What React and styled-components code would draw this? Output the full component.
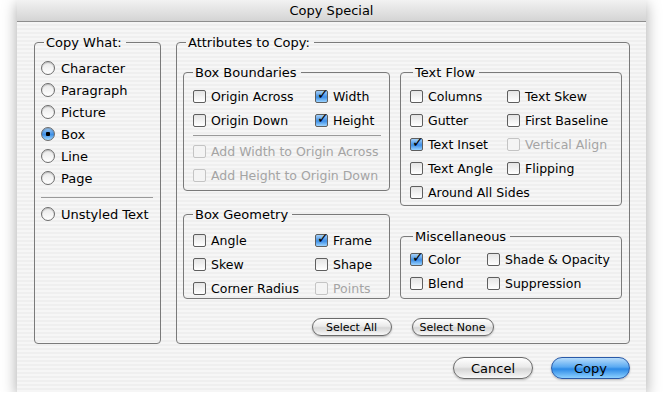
import React from "react";
import styled, { createGlobalStyle } from "styled-components";

const Global = createGlobalStyle`
  body { margin: 0; background: #fff; font-family: "DejaVu Sans", "Liberation Sans", sans-serif; font-size: 12px; color: #000; }
`;

const stripes = "repeating-linear-gradient(180deg, #efefef 0 2px, #f6f6f6 2px 4px)";

const Window = styled.div`
  margin-left: 17px;
  width: 629px;
  height: 392px;
  background: ${stripes};
  box-shadow: 0 4px 14px rgba(0,0,0,0.35);
  display: flex;
  flex-direction: column;
`;

const TitleBar = styled.div`
  height: 22px;
  box-sizing: border-box;
  border-bottom: 1px solid #8e8e8e;
  background: linear-gradient(#f2f2f2, #d4d4d4);
  display: flex;
  align-items: center;
  justify-content: center;
  font-size: 13px;
`;

const Body = styled.div`
  padding: 13px 16px 0 17px;
  display: flex;
  flex-direction: column;
`;

const Row = styled.div`
  display: flex;
  gap: ${(p) => p.gap || 0}px;
`;

const Group = styled.fieldset`
  margin: 0;
  box-sizing: border-box;
  width: ${(p) => p.w}px;
  height: ${(p) => p.h}px;
  border: 1px solid #7a7a7a;
  border-radius: 4px;
  padding: ${(p) => p.pad || "0"};
  min-width: 0;
`;

const Legend = styled.legend`
  padding: 0 4px 0 2px;
  margin-left: ${(p) => (p.tight ? 0 : 3)}px;
  font-size: 13px;
  line-height: 15px;
`;

const RadioRow = styled.div`
  height: 22px;
  display: flex;
  align-items: center;
  gap: 6px;
  font-size: 13px;
`;

const Radio = styled.span`
  width: 14px;
  height: 14px;
  box-sizing: border-box;
  border-radius: 50%;
  border: 1px solid #6c6c6c;
  background: ${(p) =>
    p.on
      ? "radial-gradient(circle at 50% 50%, #000 0 2px, transparent 2.5px), linear-gradient(#9fcaf4, #3d8fe6 55%, #a6dbff)"
      : "linear-gradient(#e8e8e8, #ffffff)"};
  box-shadow: inset 0 1px 1px rgba(0,0,0,0.2);
`;

const Sep = styled.div`
  height: 1px;
  background: #9a9a9a;
  margin: ${(p) => p.m || "8px 0"};
`;

const CheckGrid = styled.div`
  display: grid;
  grid-template-columns: ${(p) => p.cols};
  grid-auto-rows: ${(p) => p.rowH || 24}px;
`;

const CheckLabel = styled.div`
  display: flex;
  align-items: center;
  gap: 5px;
  font-size: 12.5px;
  color: ${(p) => (p.disabled ? "#a4a4a4" : "#000")};
  white-space: nowrap;
`;

const Box = styled.span`
  width: 13px;
  height: 13px;
  box-sizing: border-box;
  border: 1px solid ${(p) => (p.disabled ? "#c4c4c4" : "#5e5e5e")};
  border-radius: 2px;
  background: ${(p) =>
    p.on ? "linear-gradient(#a6d0f7, #3d8ee6 55%, #9bd3ff)" : p.disabled ? "#f4f4f4" : "linear-gradient(#e4e4e4, #fff)"};
  position: relative;
  flex: none;
`;

const Tick = styled.span`
  position: absolute;
  left: 1px;
  top: -5px;
  font-size: 14px;
  font-weight: bold;
  color: #000;
`;

const Check = ({ label, on, disabled }) => (
  <CheckLabel disabled={disabled}>
    <Box on={on} disabled={disabled}>{on && <Tick>✓</Tick>}</Box>
    {label}
  </CheckLabel>
);

const Col = styled.div`
  display: flex;
  flex-direction: column;
  gap: ${(p) => p.gap || 0}px;
`;

const ButtonRow = styled.div`
  display: flex;
  justify-content: ${(p) => p.justify || "center"};
  gap: ${(p) => p.gap}px;
  margin-top: ${(p) => p.mt}px;
`;

const Pill = styled.button`
  width: ${(p) => p.w}px;
  height: ${(p) => (p.small ? 18 : 22)}px;
  border-radius: 11px;
  border: 1px solid ${(p) => (p.primary ? "#2a5aa8" : "#6a6a6a")};
  background: ${(p) =>
    p.primary
      ? "linear-gradient(#b7dcfb, #5aaaf2 45%, #2d8ae6 55%, #8cd0ff)"
      : "linear-gradient(#ffffff, #eaeaea 45%, #d6d6d6 55%, #f8f8f8)"};
  font-family: inherit;
  font-size: ${(p) => (p.small ? 11 : 13)}px;
  color: #000;
  padding: 0;
  box-shadow: 0 1px 2px rgba(0,0,0,0.25);
`;

const copyWhat = ["Character", "Paragraph", "Picture", "Box", "Line", "Page"];

export default function App() {
  return (
    <>
      <Global />
      <Window>
        <TitleBar>Copy Special</TitleBar>
        <Body>
          <Row gap={15}>
            <Group w={127} h={309} pad="7px 7px 0 6px">
              <Legend>Copy What:</Legend>
              {copyWhat.map((c) => (
                <RadioRow key={c}>
                  <Radio on={c === "Box"} />
                  {c}
                </RadioRow>
              ))}
              <Sep m="8px 0 5px" />
              <RadioRow>
                <Radio />
                Unstyled Text
              </RadioRow>
            </Group>
            <Group w={454} h={309} pad="15px 7px 0 6px">
              <Legend>Attributes to Copy:</Legend>
              <Row gap={10}>
                <Col gap={16}>
                  <Group w={207} h={126} pad="4px 8px 0 9px">
                    <Legend tight>Box Boundaries</Legend>
                    <CheckGrid cols="122px 1fr">
                      <Check label="Origin Across" />
                      <Check label="Width" on />
                      <Check label="Origin Down" />
                      <Check label="Height" on />
                    </CheckGrid>
                    <Sep m="3px 0 3px" />
                    <CheckGrid cols="1fr">
                      <Check label="Add Width to Origin Across" disabled />
                      <Check label="Add Height to Origin Down" disabled />
                    </CheckGrid>
                  </Group>
                  <Group w={207} h={92} pad="6px 8px 0 9px">
                    <Legend tight>Box Geometry</Legend>
                    <CheckGrid cols="122px 1fr">
                      <Check label="Angle" />
                      <Check label="Frame" on />
                      <Check label="Skew" />
                      <Check label="Shape" />
                      <Check label="Corner Radius" />
                      <Check label="Points" disabled />
                    </CheckGrid>
                  </Group>
                </Col>
                <Col gap={23}>
                  <Group w={222} h={141} pad="4px 8px 0 9px">
                    <Legend>Text Flow</Legend>
                    <CheckGrid cols="97px 1fr">
                      <Check label="Columns" />
                      <Check label="Text Skew" />
                      <Check label="Gutter" />
                      <Check label="First Baseline" />
                      <Check label="Text Inset" on />
                      <Check label="Vertical Align" disabled />
                      <Check label="Text Angle" />
                      <Check label="Flipping" />
                      <Check label="Around All Sides" />
                    </CheckGrid>
                  </Group>
                  <Group w={222} h={70} pad="3px 8px 0 9px">
                    <Legend>Miscellaneous</Legend>
                    <CheckGrid cols="77px 1fr">
                      <Check label="Color" on />
                      <Check label="Shade &amp; Opacity" />
                      <Check label="Blend" />
                      <Check label="Suppression" />
                    </CheckGrid>
                  </Group>
                </Col>
              </Row>
              <ButtonRow gap={20} mt={19}>
                <Pill small w={80}>Select All</Pill>
                <Pill small w={82}>Select None</Pill>
              </ButtonRow>
            </Group>
          </Row>
          <ButtonRow justify="flex-end" gap={18} mt={13}>
            <Pill w={80}>Cancel</Pill>
            <Pill primary w={79}>Copy</Pill>
          </ButtonRow>
        </Body>
      </Window>
    </>
  );
}
